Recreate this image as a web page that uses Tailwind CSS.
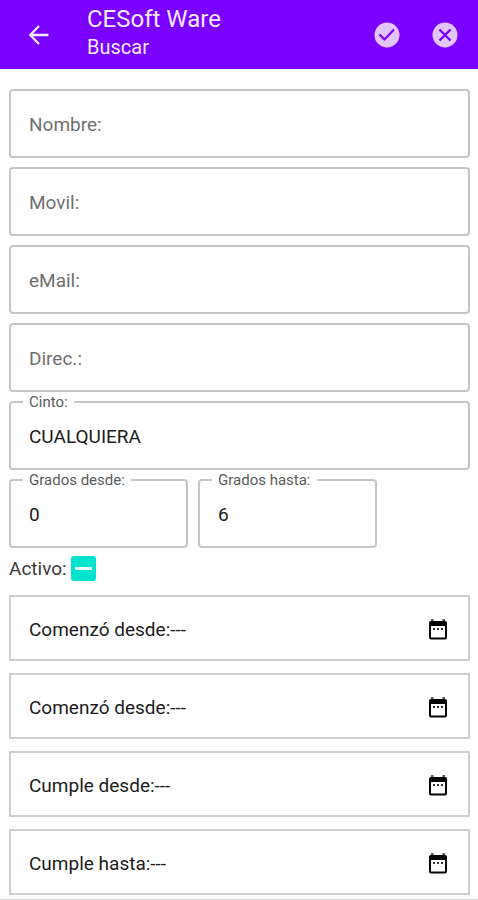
<!DOCTYPE html>
<html lang="es">
<head>
<meta charset="utf-8">
<meta name="viewport" content="width=device-width, initial-scale=1">
<title>CESoft Ware - Buscar</title>
<script src="https://cdn.jsdelivr.net/npm/@tailwindcss/browser@4"></script>
</head>
<body class="min-h-screen bg-white font-['Roboto','Liberation_Sans',sans-serif] text-[19px] leading-6 text-[#1c1c1c]">
<div class="flex min-h-screen flex-col border-b-2 border-[#d6d6d6]">
<header class="flex h-[69px] items-center bg-[#7a00ff] pr-[18px] pl-[27px] text-[#f6ebff]">
  <button type="button" aria-label="Volver" class="shrink-0">
    <svg class="size-6" viewBox="0 0 24 24" fill="none" stroke="currentColor" stroke-width="2.3"><path d="M21.500 12H4M12 3L3.200 12l8.800 9"/></svg>
  </button>
  <div class="ml-9 flex-1 pb-1">
    <h1 class="text-2xl leading-7">CESoft Ware</h1>
    <p class="text-xl leading-7">Buscar</p>
  </div>
  <div class="flex gap-7">
    <button type="button" aria-label="Aceptar"><svg class="size-[30px]" viewBox="0 0 30 30"><circle cx="15" cy="15" r="12.500" fill="#e2c4ff"/><path d="M7.500 14.500l5 5 9.500-10" fill="none" stroke="#7a00ff" stroke-width="2.200"/></svg></button>
    <button type="button" aria-label="Cancelar"><svg class="size-[30px]" viewBox="0 0 30 30"><circle cx="15" cy="15" r="12.500" fill="#e2c4ff"/><path d="M9.500 9.500l11 11M20.500 9.500l-11 11" fill="none" stroke="#7a00ff" stroke-width="2.400"/></svg></button>
  </div>
</header>
<form class="flex flex-col pt-5 pr-2 pb-1 pl-[9px]">
  <div class="flex flex-col gap-[9px]">
    <div class="relative">
      <input id="nombre" type="text" class="block h-[69px] w-full rounded-[4px] border-2 border-[#c6c6c6] px-[18px] pt-[2px]">
      <label for="nombre" class="absolute inset-y-0 left-5 flex items-center pt-[2px] text-[#6f6f6f]">Nombre:</label>
    </div>
    <div class="relative">
      <input id="movil" type="text" class="block h-[69px] w-full rounded-[4px] border-2 border-[#c6c6c6] px-[18px] pt-[2px]">
      <label for="movil" class="absolute inset-y-0 left-5 flex items-center pt-[2px] text-[#6f6f6f]">Movil:</label>
    </div>
    <div class="relative">
      <input id="email" type="text" class="block h-[69px] w-full rounded-[4px] border-2 border-[#c6c6c6] px-[18px] pt-[2px]">
      <label for="email" class="absolute inset-y-0 left-5 flex items-center pt-[2px] text-[#6f6f6f]">eMail:</label>
    </div>
    <div class="relative">
      <input id="direc" type="text" class="block h-[69px] w-full rounded-[4px] border-2 border-[#c6c6c6] px-[18px] pt-[2px]">
      <label for="direc" class="absolute inset-y-0 left-5 flex items-center pt-[2px] text-[#6f6f6f]">Direc.:</label>
    </div>
    <div class="relative">
      <select id="cinto" class="block h-[69px] w-full appearance-none rounded-[4px] border-2 border-[#c6c6c6] px-[18px] pt-[2px]"><option>CUALQUIERA</option></select>
      <label for="cinto" class="absolute -top-2 left-[14px] bg-white px-[6px] text-[15px] leading-[18px] text-[#5c5c5c]">Cinto:</label>
    </div>
    <div class="grid grid-cols-[179fr_179fr_83fr] gap-[10px]">
      <div class="relative">
        <input id="gdesde" type="text" inputmode="numeric" value="0" class="block h-[69px] w-full rounded-[4px] border-2 border-[#c6c6c6] px-[18px] pt-[2px]">
        <label for="gdesde" class="absolute -top-2 left-[14px] bg-white px-[6px] text-[15px] leading-[18px] text-[#5c5c5c]">Grados desde:</label>
      </div>
      <div class="relative">
        <input id="ghasta" type="text" inputmode="numeric" value="6" class="block h-[69px] w-full rounded-[4px] border-2 border-[#c6c6c6] px-[18px] pt-[2px]">
        <label for="ghasta" class="absolute -top-2 left-[14px] bg-white px-[6px] text-[15px] leading-[18px] text-[#5c5c5c]">Grados hasta:</label>
      </div>
    </div>
  </div>
  <div class="mt-2 flex items-center gap-1">
    <label for="activo" class="text-[#3a3a3a]">Activo:</label>
    <span class="relative flex size-[25px]">
      <input id="activo" type="checkbox" class="size-[25px] appearance-none rounded-[3px] bg-[#00e3cf]">
      <svg class="pointer-events-none absolute inset-0 size-[25px]" viewBox="0 0 25 25"><path d="M4 12.500h17" stroke="#e9fffb" stroke-width="3"/></svg>
    </span>
  </div>
  <div class="mt-[14px] flex flex-col gap-3">
    <button type="button" class="flex h-[66px] items-center justify-between border-2 border-[#cecece] px-[18px] pt-1">
      <span>Comenzó desde:---</span>
      <svg class="size-6" viewBox="0 0 24 24"><path d="M5 1h2.500v3H5zM16.500 1H19v3h-2.500z" fill="#555"/><path d="M5 3h14q2 0 2 2v14.500q0 2-2 2H5q-2 0-2-2V5q0-2 2-2zM5 8v11.500h14V8z" fill="#050505" fill-rule="evenodd"/><path d="M7 10h2v2H7zM11 10h2v2h-2zM15 10h2v2h-2z" fill="#333"/></svg>
    </button>
    <button type="button" class="flex h-[66px] items-center justify-between border-2 border-[#cecece] px-[18px] pt-1">
      <span>Comenzó desde:---</span>
      <svg class="size-6" viewBox="0 0 24 24"><path d="M5 1h2.500v3H5zM16.500 1H19v3h-2.500z" fill="#555"/><path d="M5 3h14q2 0 2 2v14.500q0 2-2 2H5q-2 0-2-2V5q0-2 2-2zM5 8v11.500h14V8z" fill="#050505" fill-rule="evenodd"/><path d="M7 10h2v2H7zM11 10h2v2h-2zM15 10h2v2h-2z" fill="#333"/></svg>
    </button>
    <button type="button" class="flex h-[66px] items-center justify-between border-2 border-[#cecece] px-[18px] pt-1">
      <span>Cumple desde:---</span>
      <svg class="size-6" viewBox="0 0 24 24"><path d="M5 1h2.500v3H5zM16.500 1H19v3h-2.500z" fill="#555"/><path d="M5 3h14q2 0 2 2v14.500q0 2-2 2H5q-2 0-2-2V5q0-2 2-2zM5 8v11.500h14V8z" fill="#050505" fill-rule="evenodd"/><path d="M7 10h2v2H7zM11 10h2v2h-2zM15 10h2v2h-2z" fill="#333"/></svg>
    </button>
    <button type="button" class="flex h-[66px] items-center justify-between border-2 border-[#cecece] px-[18px] pt-1">
      <span>Cumple hasta:---</span>
      <svg class="size-6" viewBox="0 0 24 24"><path d="M5 1h2.500v3H5zM16.500 1H19v3h-2.500z" fill="#555"/><path d="M5 3h14q2 0 2 2v14.500q0 2-2 2H5q-2 0-2-2V5q0-2 2-2zM5 8v11.500h14V8z" fill="#050505" fill-rule="evenodd"/><path d="M7 10h2v2H7zM11 10h2v2h-2zM15 10h2v2h-2z" fill="#333"/></svg>
    </button>
  </div>
</form>
</div>
</body>
</html>
